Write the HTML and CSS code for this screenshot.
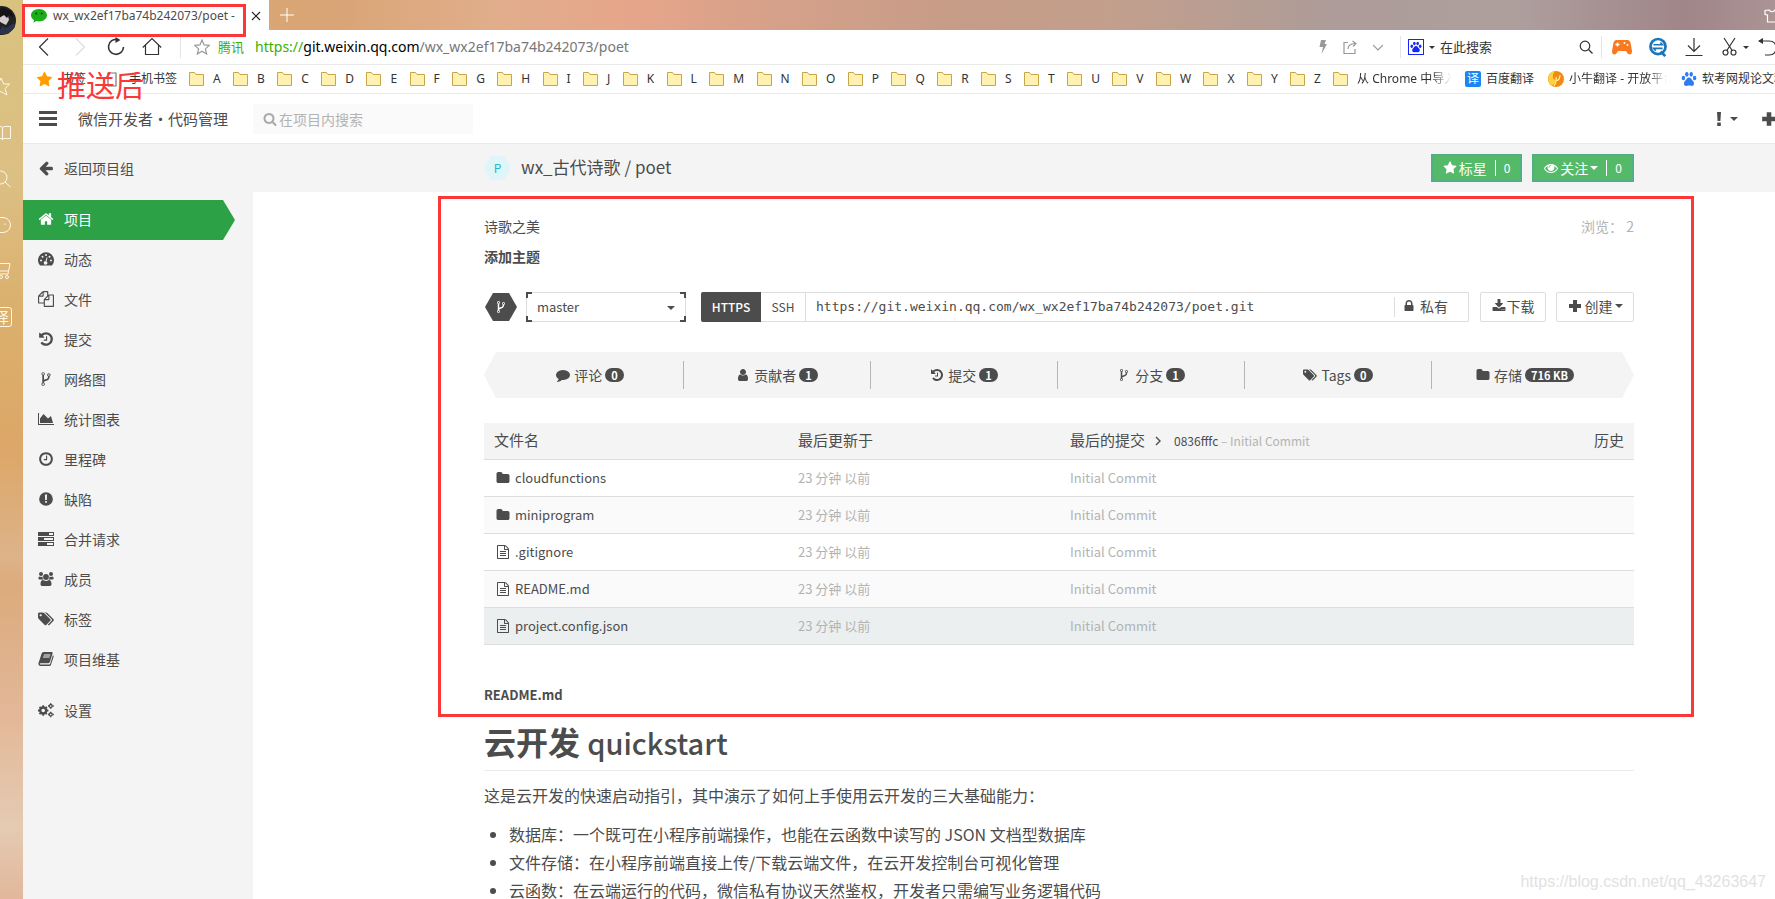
FILE: index.html
```html
<!DOCTYPE html>
<html lang="zh-CN">
<head>
<meta charset="utf-8">
<title>wx_wx2ef17ba74b242073/poet</title>
<link rel="stylesheet" href="styles.css">
</head>
<body>
<svg class="sprite" aria-hidden="true">
  <symbol id="home" viewBox="0 0 1792 1792"><path d="M1472 992v480q0 26-19 45t-45 19h-384v-384h-256v384h-384q-26 0-45-19t-19-45v-480q0-1 .5-3t.5-3l575-474 575 474q1 2 1 6zm223-69l-62 74q-8 9-21 11h-3q-13 0-21-7l-692-577-692 577q-12 8-24 7-13-2-21-11l-62-74q-8-10-7-23.500t11-21.500l719-599q32-26 76-26t76 26l244 204v-195q0-14 9-23t23-9h192q14 0 23 9t9 23v408l219 182q10 8 11 21.500t-7 23.500z"/></symbol>
  <symbol id="files" viewBox="0 0 1792 1792"><path d="M1696 384q40 0 68 28t28 68v1216q0 40-28 68t-68 28h-960q-40 0-68-28t-28-68v-288h-544q-40 0-68-28t-28-68v-672q0-40 20-88t48-76l408-408q28-28 76-48t88-20h416q40 0 68 28t28 68v328q68-40 128-40h416zm-544 213l-299 299h299v-299zm-640-384l-299 299h299v-299zm196 647l316-316v-416h-384v416q0 40-28 68t-68 28h-416v640h512v-256q0-40 20-88t48-76zm956 804v-1152h-384v416q0 40-28 68t-68 28h-416v640h896z"/></symbol>
  <symbol id="history" viewBox="0 0 1792 1792"><path d="M1664 896q0 156-61 298t-164 245-245 164-298 61q-172 0-327-72.500t-264-204.500q-7-10-6.500-22.500t8.500-20.500l137-138q10-9 25-9 16 2 23 12 73 95 179 147t225 52q104 0 198.500-40.500t163.500-109.500 109.500-163.500 40.500-198.500-40.500-198.500-109.500-163.500-163.500-109.500-198.500-40.500q-98 0-188 35.500t-160 101.500l137 138q31 30 14 69-17 40-59 40h-448q-26 0-45-19t-19-45v-448q0-42 40-59 39-17 69 14l130 129q107-101 244.500-156.500t284.500-55.500q156 0 298 61t245 164 164 245 61 298zm-640-288v448q0 14-9 23t-23 9h-320q-14 0-23-9t-9-23v-64q0-14 9-23t23-9h224v-352q0-14 9-23t23-9h64q14 0 23 9t9 23z"/></symbol>
  <symbol id="fork" viewBox="0 0 1792 1792"><path d="M672 1472q0-40-28-68t-68-28-68 28-28 68 28 68 68 28 68-28 28-68zm0-1152q0-40-28-68t-68-28-68 28-28 68 28 68 68 28 68-28 28-68zm640 128q0-40-28-68t-68-28-68 28-28 68 28 68 68 28 68-28 28-68zm96 0q0 52-26 96.500t-70 69.500q-2 287-226 414-67 38-203 81-128 40-169.500 71t-41.500 100v26q44 25 70 69.500t26 96.500q0 80-56 136t-136 56-136-56-56-136q0-52 26-96.500t70-69.500v-820q-44-25-70-69.500t-26-96.500q0-80 56-136t136-56 136 56 56 136q0 52-26 96.500t-70 69.500v497q54-26 154-57 55-17 87.500-29.500t70.500-31 59-39.500 40.500-51 28-69.500 8.500-91.500q-44-25-70-69.500t-26-96.500q0-80 56-136t136-56 136 56 56 136z"/></symbol>
  <symbol id="chart" viewBox="0 0 2048 1792"><path d="M2048 1536v128h-2048v-1536h128v1408h1920zm-384-1024l256 896h-1664v-576l448-576 576 576z"/></symbol>
  <symbol id="clock" viewBox="0 0 1792 1792"><path d="M1024 544v448q0 14-9 23t-23 9h-320q-14 0-23-9t-9-23v-64q0-14 9-23t23-9h224v-352q0-14 9-23t23-9h64q14 0 23 9t9 23zm416 352q0-148-73-273t-198-198-273-73-273 73-198 198-73 273 73 273 198 198 273 73 273-73 198-198 73-273zm224 0q0 209-103 385.500t-279.500 279.500-385.500 103-385.500-103-279.500-279.500-103-385.500 103-385.500 279.500-279.500 385.500-103 385.500 103 279.500 279.500 103 385.500z"/></symbol>
  <symbol id="alert" viewBox="0 0 1792 1792"><path fill-rule="evenodd" d="M896 128a768 768 0 1 1 0 1536a768 768 0 1 1 0-1536zM780 384l18 620h196l18-620zM800 1120h192v190h-192z"/></symbol>
  <symbol id="server" viewBox="0 0 16 16"><path fill-rule="evenodd" d="M0 1h16v4H0zM11 2h4v2h-4zM0 6h16v4H0zM6 7h9v2H6zM0 11h16v4H0zM9 12h6v2H9z"/></symbol>
  <symbol id="gauge" viewBox="0 0 16 16"><path fill-rule="evenodd" d="M2 14.500A8 8 0 1 1 14 14.500zM2 9.500a1 1 0 1 0 2 0a1 1 0 1 0-2 0zM3.500 5.700a1 1 0 1 0 2 0a1 1 0 1 0-2 0zM7 4a1 1 0 1 0 2 0a1 1 0 1 0-2 0zM10.500 5.700a1 1 0 1 0 2 0a1 1 0 1 0-2 0zM12 9.500a1 1 0 1 0 2 0a1 1 0 1 0-2 0zM8.700 6.200l-1.200 4a1.700 1.700 0 1 0 1 .3l1-4z"/></symbol>
  <symbol id="users" viewBox="0 0 16 16"><circle cx="8" cy="6" r="2.900"/><circle cx="3" cy="3" r="2"/><circle cx="13" cy="3" r="2"/><path d="M1.500 5.500c1 .6 2 .6 3 0c0 1.500.3 2 1 3H1.500Q.4 8.500.4 7.200T1.500 5.500zM14.500 5.500c-1 .6-2 .6-3 0c0 1.500-.3 2-1 3h4q1.100 0 1.100-1.300t-1.100-1.700zM5.200 9c1.800 1.200 3.800 1.200 5.600 0c2 .1 2.700 1.600 2.700 4.200c0 1.200-.8 1.800-2 1.800h-7c-1.200 0-2-.6-2-1.800C2.500 10.600 3.200 9.100 5.200 9z"/></symbol>
  <symbol id="tags" viewBox="0 0 1920 1792"><path d="M448 448q0-53-37.500-90.500t-90.500-37.500-90.500 37.500-37.500 90.500 37.500 90.500 90.500 37.500 90.500-37.500 37.500-90.500zm1067 576q0 53-37 90l-491 492q-39 37-91 37-53 0-90-37l-715-716q-38-37-64.500-101t-26.500-117v-416q0-52 38-90t90-38h416q53 0 117 26.500t102 64.500l715 714q37 39 37 91zm384 0q0 53-37 90l-491 492q-39 37-91 37-36 0-59-14t-53-45l470-470q37-37 37-90 0-52-37-91l-715-714q-38-38-102-64.500t-117-26.500h224q53 0 117 26.500t102 64.500l715 714q37 39 37 91z"/></symbol>
  <symbol id="book" viewBox="0 0 16 16"><path fill-rule="evenodd" d="M5.500 1h8.200q1.300.1.900 1.500l-2.700 8.600q-.4 1.100-1.500 1.100H2.500q-.9 0-.7.700q.2.600 1 .6h8.400q.8 0 1.100-.9l2.600-8.400q1 .4.700 1.500l-2.600 8q-.4 1.300-1.700 1.300H2.500Q.6 15 .4 13q0-.8.300-1.600L3.600 2.600Q4.100 1 5.500 1zM5.900 3.500l-.3.900h6.600l.3-.9zM5.200 5.600l-.3.900h6.600l.3-.9z"/></symbol>
  <symbol id="cogs" viewBox="0 0 16 16"><path fill="none" stroke="currentColor" stroke-width="2.400" d="M2.200 8.500a3 3 0 1 0 6 0a3 3 0 1 0-6 0"/><path fill="none" stroke="currentColor" stroke-width="1.800" d="M5.200 3.200v2M5.200 11.800v2M0 8.500h2M8.400 8.500h2M1.500 4.800l1.400 1.400M7.500 10.800l1.400 1.400M1.500 12.200l1.400-1.400M7.500 6.200l1.400-1.400"/><g fill="none" stroke="currentColor" stroke-width="1.300"><circle cx="12.700" cy="4" r="1.500"/><circle cx="12.700" cy="12.500" r="1.500"/><path d="M12.700 1.200v1M12.700 5.800v1M10 4h1M14.500 4h1.300M12.700 9.700v1M12.700 14.300v1M10 12.500h1M14.500 12.500h1.300"/></g></symbol>
  <symbol id="left" viewBox="0 0 1792 1792"><path d="M1664 896v128q0 53-32.500 90.500t-84.500 37.500h-704l293 294q38 36 38 90t-38 90l-75 76q-37 37-90 37-52 0-91-37l-651-652q-37-37-37-90 0-52 37-91l651-650q38-38 91-38 52 0 90 38l75 74q38 38 38 91t-38 91l-293 293h704q52 0 84.500 37.500t32.500 90.500z"/></symbol>
  <symbol id="star" viewBox="0 0 1792 1792"><path d="M1728 647q0 22-26 48l-363 354 86 500q1 7 1 20 0 21-10.500 35.500t-30.500 14.500q-19 0-40-12l-449-236-449 236q-22 12-40 12-21 0-31.500-14.500t-10.500-35.500q0-6 2-20l86-500-364-354q-25-27-25-48 0-37 56-46l502-73 225-455q19-41 49-41t49 41l225 455 502 73q56 9 56 46z"/></symbol>
  <symbol id="eye" viewBox="0 0 1792 1792"><path d="M1664 960q-152-236-381-353 61 104 61 225 0 185-131.500 316.500t-316.500 131.500-316.500-131.500-131.500-316.500q0-121 61-225-229 117-381 353 133 205 333.500 326.500t434.500 121.500 434.500-121.500 333.500-326.500zm-720-384q0-20-14-34t-34-14q-125 0-214.500 89.500t-89.500 214.500q0 20 14 34t34 14 34-14 14-34q0-86 61-147t147-61q20 0 34-14t14-34zm848 384q0 34-20 69-140 230-376.500 368.500t-499.500 138.500-499.500-139-376.500-368q-20-35-20-69t20-69q140-229 376.500-368t499.500-139 499.500 139 376.500 368q20 35 20 69z"/></symbol>
  <symbol id="folder" viewBox="0 0 1792 1792"><path d="M1728 608v704q0 92-66 158t-158 66h-1216q-92 0-158-66t-66-158v-960q0-92 66-158t158-66h320q92 0 158 66t66 158v32h672q92 0 158 66t66 158z"/></symbol>
  <symbol id="file" viewBox="0 0 1792 1792"><path d="M1596 380q28 28 48 76t20 88v1152q0 40-28 68t-68 28h-1344q-40 0-68-28t-28-68v-1600q0-40 28-68t68-28h896q40 0 88 20t76 48zm-444-244v376h376q-10-29-22-41l-313-313q-12-12-41-22zm384 1528v-1024h-416q-40 0-68-28t-28-68v-416h-768v1536h1280zm-1024-864q0-14 9-23t23-9h704q14 0 23 9t9 23v64q0 14-9 23t-23 9h-704q-14 0-23-9t-9-23v-64zm736 224q14 0 23 9t9 23v64q0 14-9 23t-23 9h-704q-14 0-23-9t-9-23v-64q0-14 9-23t23-9h704zm0 256q14 0 23 9t9 23v64q0 14-9 23t-23 9h-704q-14 0-23-9t-9-23v-64q0-14 9-23t23-9h704z"/></symbol>
  <symbol id="lock" viewBox="0 0 1792 1792"><path d="M640 768h512v-192q0-106-75-181t-181-75-181 75-75 181v192zm832 96v576q0 40-28 68t-68 28h-960q-40 0-68-28t-28-68v-576q0-40 28-68t68-28h32v-192q0-184 132-316t316-132 316 132 132 316v192h32q40 0 68 28t28 68z"/></symbol>
  <symbol id="download" viewBox="0 0 1792 1792"><path d="M1344 1344q0-26-19-45t-45-19-45 19-19 45 19 45 45 19 45-19 19-45zm256 0q0-26-19-45t-45-19-45 19-19 45 19 45 45 19 45-19 19-45zm128-224v320q0 40-28 68t-68 28h-1472q-40 0-68-28t-28-68v-320q0-40 28-68t68-28h465l135 136q58 56 136 56t136-56l136-136h464q40 0 68 28t28 68zm-325-569q17 41-14 70l-448 448q-18 19-45 19t-45-19l-448-448q-31-29-14-70 17-39 59-39h256v-448q0-26 19-45t45-19h256q26 0 45 19t19 45v448h256q42 0 59 39z"/></symbol>
  <symbol id="plus" viewBox="0 0 14 14"><path d="M5 1h4v4h4v4H9v4H5V9H1V5h4z"/></symbol>
  <symbol id="search" viewBox="0 0 1792 1792"><path d="M1216 832q0-185-131.500-316.500t-316.500-131.500-316.500 131.500-131.500 316.500 131.500 316.500 316.500 131.500 316.500-131.500 131.500-316.500zm512 832q0 52-38 90t-90 38q-54 0-90-38l-343-342q-179 124-399 124-143 0-273.500-55.500t-225-150-150-225-55.500-273.500 55.500-273.500 150-225 225-150 273.500-55.500 273.500 55.500 225 150 150 225 55.500 273.500q0 220-124 399l343 343q37 37 37 90z"/></symbol>
  <symbol id="comment" viewBox="0 0 1792 1792"><path d="M1792 896q0 174-120 321.500t-326 233-450 85.500q-70 0-145-8-198 175-460 242-49 14-114 22-17 2-30.500-9t-17.500-29v-1q-3-4-.5-12t2-10 4.500-9.500l6-9 7-8.500 8-9q7-8 31-34.500t34.500-38 31-39.500 32.500-51 27-59 26-76q-157-89-247.500-220t-90.500-281q0-174 120-321.500t326-233 450-85.500 450 85.500 326 233 120 321.500z"/></symbol>
  <symbol id="user" viewBox="0 0 1792 1792"><path d="M1536 1399q0 109-62.500 187t-150.500 78h-854q-88 0-150.500-78t-62.500-187q0-85 8.500-160.500t31.500-152 58.500-131 94-89 134.500-34.500q131 128 313 128t313-128q76 0 134.500 34.500t94 89 58.500 131 31.500 152 8.500 160.500zm-256-887q0 159-112.500 271.500t-271.500 112.500-271.500-112.500-112.500-271.500 112.500-271.500 271.500-112.500 271.500 112.500 112.500 271.500z"/></symbol>
  <symbol id="caret" viewBox="0 0 8 4"><path d="M0 0h8L4 4z"/></symbol>
  <symbol id="bmfolder" viewBox="0 0 15 14"><path fill="#fff1b0" stroke="#c9a448" d="M.5.500h5l1.500 2h7.500v11H.500z"/></symbol>
  <symbol id="paw" viewBox="0 0 16 16"><ellipse cx="2.400" cy="7" rx="1.700" ry="2.300"/><ellipse cx="5.800" cy="3.300" rx="1.700" ry="2.400"/><ellipse cx="10.200" cy="3.300" rx="1.700" ry="2.400"/><ellipse cx="13.600" cy="7" rx="1.700" ry="2.300"/><path d="M8 6.500c2 0 2.500 2 3.800 3.300c2 2 1.500 5.200-1 5.200c-1.200 0-1.800-.4-2.800-.4s-1.600.4-2.800.4c-2.500 0-3-3.200-1-5.200C5.500 8.500 6 6.500 8 6.500z"/></symbol>
</svg>

<div class="screen">
  <aside class="rail">
    <svg class="avatar" viewBox="0 0 29 29"><circle cx="14.500" cy="14.500" r="14.500" fill="#222226"/><path fill="#d5cccd" d="M12 10l5-1 4 1 1 4-3 5-4-2-3-2z"/><path fill="#141416" d="M8 5l8-4 8 4 3 7-5-3-2 3-3-3-5 3-5 4z"/><path fill="#2b344b" d="M15 20l4 2 8-5 1 4-7 7H11z"/></svg>
    <svg viewBox="0 0 20 20"><path d="M10 1l2.700 6h6l-4.700 4.500L16 18l-6-3.500L4 18l2-6.500L1.300 7h6z"/></svg>
    <svg viewBox="0 0 20 20"><path d="M11.500 5v11.500M11.500 5l-1-1.500H1v12h9.500l1 1.500 1-1.500h7v-12h-7z"/></svg>
    <svg viewBox="0 0 20 20"><circle cx="9.500" cy="8.500" r="6.500"/><path d="M14 13l5.500 5"/></svg>
    <svg viewBox="0 0 20 20"><path d="M3 2.500h9a7.500 7.500 0 0 1 0 15H3M14 8.500v1.500"/></svg>
    <svg viewBox="0 0 20 20"><path d="M1 2.500h18l-2 10.500H4M4 10h13.500"/><circle cx="10" cy="16" r="1.500"/><circle cx="16" cy="16" r="1.500"/></svg>
    <span class="rail-word">译</span>
  </aside>

  <div class="window">
    <div class="tabs">
      <div class="tab">
        <svg class="wechat" viewBox="0 0 16 14"><path fill="#1aad19" d="M8 0c4.400 0 8 2.800 8 6.200s-3.600 6.200-8 6.200c-1 0-1.900-.1-2.800-.4L2.500 13.800l.6-2.700C1.200 10 0 8.200 0 6.200C0 2.800 3.600 0 8 0z"/><circle cx="5.200" cy="4.500" r="1.100" fill="#0a4d0a"/><circle cx="10.800" cy="4.500" r="1.100" fill="#0a4d0a"/></svg>
        <span class="tab-title">wx_wx2ef17ba74b242073/poet -</span>
        <button class="plain" aria-label="关闭标签"><svg class="i10" viewBox="0 0 10 10"><path fill="none" stroke="#222" stroke-width="1.200" d="M1 1l8 8M9 1l-8 8"/></svg></button>
      </div>
      <button class="plain new-tab" aria-label="新标签"><svg class="i14" viewBox="0 0 14 14"><path stroke="#fff" d="M7 0v14M0 7h14"/></svg></button>
      <svg class="shirt" viewBox="0 0 16 14"><path fill="none" stroke="#fff" stroke-width="1.200" d="M5 1L1 1.500v4l2.500.5v7h9V6l2.500-.5v-4L11 1Q8 4.500 5 1z"/></svg>
      <span class="mark mark-tab"></span>
    </div>

    <div class="navbar">
      <div class="nav-buttons">
        <button class="plain" aria-label="后退"><svg class="i20" viewBox="0 0 20 20"><path class="ln" d="M14 1.500L5.500 10l8.500 8.500"/></svg></button>
        <button class="plain pale" aria-label="前进"><svg class="i20" viewBox="0 0 20 20"><path class="ln" d="M6 1.500l8.500 8.500L6 18.500"/></svg></button>
        <button class="plain" aria-label="刷新"><svg class="i20" viewBox="0 0 20 20"><path class="ln thick" d="M11.500 2.500A7.500 7.500 0 1 0 17.500 10"/><path d="M9.500 0l5 3-5 3z"/></svg></button>
        <button class="plain" aria-label="主页"><svg class="i20" viewBox="0 0 20 20"><path class="ln" d="M.8 10.500L10 1.500l9.200 9M3.500 8.500v9h13v-9"/></svg></button>
      </div>
      <div class="address">
        <svg class="i16 outline-star" viewBox="0 0 16 16"><path class="ln" d="M8 1l2.100 4.900 5.200.5-3.900 3.500 1.200 5.100L8 12.300 3.400 15l1.200-5.100L.7 6.400l5.200-.5z"/></svg>
        <span class="owner">腾讯</span>
        <span class="url"><span class="scheme">https://</span><b>git.weixin.qq.com</b>/wx_wx2ef17ba74b242073/poet</span>
      </div>
      <div class="addr-tools">
        <svg class="bolt" viewBox="0 0 8 14"><path d="M2 0h5L5.500 4H8L2.500 14 4 7H.5z"/></svg>
        <svg class="i14" viewBox="0 0 14 14"><path class="ln" d="M5 2.500H1v11h11V9M5 9q0-5 7-5.500M9.500 1l3.500 2.500L10 6.500"/></svg>
        <svg class="i10" viewBox="0 0 10 10"><path class="ln" d="M0 3l5 5 5-5"/></svg>
      </div>
      <label class="engine">
        <span class="baidu"><svg viewBox="0 0 16 16"><use href="#paw"/></svg></span>
        <svg class="mini-caret"><use href="#caret"/></svg>
        <input type="text" placeholder="在此搜索">
        <svg class="i14" viewBox="0 0 14 14"><circle cx="6" cy="6" r="4.800" class="ln"/><path class="ln" d="M9.500 9.500L13.500 13.500"/></svg>
      </label>
      <div class="extras">
        <svg class="i20" viewBox="0 0 20 16"><path fill="#f8791f" d="M4.500 1h11q2.500 0 3.200 3.500L20 12q0 3.500-2.500 3.500-1.500 0-3.500-3.500H6q-2 3.500-3.500 3.500Q0 15.500 0 12l1.300-7.500Q2 1 4.500 1z"/><path stroke="#fff" stroke-width="1.400" d="M3.500 5.500h4M5.500 3.500v4"/><circle cx="12.500" cy="4" r="1" fill="#fff"/><circle cx="15.500" cy="6" r="1" fill="#fff"/></svg>
        <svg class="i20" viewBox="0 0 20 22"><circle cx="10" cy="10.500" r="8.300" fill="#fff" stroke="#1a76b8" stroke-width="3"/><path stroke="#1a76b8" stroke-width="3" d="M13 16l5 5"/><path fill="none" stroke="#1a76b8" stroke-width="1.700" d="M5 8.500h10L12.500 6M15 12.500H5L7.500 15"/></svg>
        <svg class="i20" viewBox="0 0 20 20"><path class="ln" d="M10 1v13M4 8.500l6 6 6-6M1.500 18.500h17"/></svg>
        <svg class="i20" viewBox="0 0 20 20"><path class="ln" d="M4 1l8.500 13M15 1L6.500 14"/><circle class="ln" cx="5.500" cy="15.500" r="2.500"/><circle class="ln" cx="13.500" cy="15.500" r="2.500"/></svg>
        <svg class="mini-caret"><use href="#caret"/></svg>
        <svg class="i20" viewBox="0 0 20 20"><path class="ln" d="M2 4h10q7 0 7 7T12 18H8"/><path d="M1 4l5-3v6z"/></svg>
      </div>
    </div>

    <nav class="bookmarks">
      <a href="#"><svg class="bm-star" viewBox="80 100 1632 1560"><use href="#star" width="1792" height="1792"/></svg><span>书签</span></a>
      <a href="#" class="phone-mark"><svg viewBox="0 0 10 15"><path fill="none" stroke="#777" stroke-width="1.200" d="M1 1h8v13H1z"/></svg><span>手机书签</span></a>
      <ul class="letters">
        <li><svg><use href="#bmfolder"/></svg>A</li><li><svg><use href="#bmfolder"/></svg>B</li><li><svg><use href="#bmfolder"/></svg>C</li><li><svg><use href="#bmfolder"/></svg>D</li><li><svg><use href="#bmfolder"/></svg>E</li><li><svg><use href="#bmfolder"/></svg>F</li><li><svg><use href="#bmfolder"/></svg>G</li><li><svg><use href="#bmfolder"/></svg>H</li><li><svg><use href="#bmfolder"/></svg>I</li><li><svg><use href="#bmfolder"/></svg>J</li><li><svg><use href="#bmfolder"/></svg>K</li><li><svg><use href="#bmfolder"/></svg>L</li><li><svg><use href="#bmfolder"/></svg>M</li><li><svg><use href="#bmfolder"/></svg>N</li><li><svg><use href="#bmfolder"/></svg>O</li><li><svg><use href="#bmfolder"/></svg>P</li><li><svg><use href="#bmfolder"/></svg>Q</li><li><svg><use href="#bmfolder"/></svg>R</li><li><svg><use href="#bmfolder"/></svg>S</li><li><svg><use href="#bmfolder"/></svg>T</li><li><svg><use href="#bmfolder"/></svg>U</li><li><svg><use href="#bmfolder"/></svg>V</li><li><svg><use href="#bmfolder"/></svg>W</li><li><svg><use href="#bmfolder"/></svg>X</li><li><svg><use href="#bmfolder"/></svg>Y</li><li><svg><use href="#bmfolder"/></svg>Z</li>
      </ul>
      <div class="sites">
        <a href="#" class="wide"><svg class="bm-folder"><use href="#bmfolder"/></svg><span class="fade">从 Chrome 中导入</span></a>
        <a href="#"><span class="yi">译</span><span>百度翻译</span></a>
        <a href="#"><svg class="i16" viewBox="0 0 16 16"><circle cx="8" cy="8" r="8" fill="#f28a12"/><path fill="#ffd23c" d="M7 0a8 8 0 0 0-3 14.500Q7 13 7.500 9Q2 7 7 0z"/><path fill="none" stroke="#fff1a8" stroke-width="1.200" d="M6 15Q9 10 8 6M8 10Q12 9 12 4"/></svg><span class="fade long">小牛翻译 - 开放平台</span></a>
        <a href="#"><svg class="i16 blue"><use href="#paw"/></svg><span>软考网规论文精选</span></a>
      </div>
      <strong class="note">推送后</strong>
    </nav>

    <header class="site-head">
      <button class="plain burger" aria-label="菜单"><i></i><i></i><i></i></button>
      <span class="brand">微信开发者・代码管理</span>
      <label class="search"><svg><use href="#search"/></svg><input type="text" placeholder="在项目内搜索"></label>
      <div class="head-tools">
        <button class="plain" aria-label="提醒"><svg class="bang" viewBox="0 0 6 14"><path d="M1 0h4l-.6 9H1.600zM1.200 10.500h3.600V14H1.200z"/></svg><svg class="caret"><use href="#caret"/></svg></button>
        <button class="plain" aria-label="新建"><svg class="i16"><use href="#plus"/></svg></button>
      </div>
    </header>

    <div class="body">
      <nav class="side">
        <a class="back" href="#"><svg><use href="#left"/></svg>返回项目组</a>
        <a class="active" href="#"><svg><use href="#home"/></svg>项目</a>
        <a href="#"><svg><use href="#gauge"/></svg>动态</a>
        <a href="#"><svg><use href="#files"/></svg>文件</a>
        <a href="#"><svg><use href="#history"/></svg>提交</a>
        <a href="#"><svg><use href="#fork"/></svg>网络图</a>
        <a href="#"><svg><use href="#chart"/></svg>统计图表</a>
        <a href="#"><svg><use href="#clock"/></svg>里程碑</a>
        <a href="#"><svg><use href="#alert"/></svg>缺陷</a>
        <a href="#"><svg><use href="#server"/></svg>合并请求</a>
        <a href="#"><svg><use href="#users"/></svg>成员</a>
        <a href="#"><svg><use href="#tags"/></svg>标签</a>
        <a href="#"><svg><use href="#book"/></svg>项目维基</a>
        <a class="settings" href="#"><svg><use href="#cogs"/></svg>设置</a>
      </nav>

      <main class="main">
        <div class="title-bar">
          <span class="hex letter">P</span>
          <h2>wx_古代诗歌 / poet</h2>
          <button class="green"><svg><use href="#star"/></svg>标星<em>0</em></button>
          <button class="green"><svg><use href="#eye"/></svg>关注<svg class="caret"><use href="#caret"/></svg><em>0</em></button>
        </div>

        <section class="repo">
          <div class="row"><span>诗歌之美</span><span class="muted">浏览： 2</span></div>
          <a class="topic" href="#">添加主题</a>

          <div class="clone">
            <span class="hex dark"><svg><use href="#fork"/></svg></span>
            <label class="branch"><select aria-label="分支"><option>master</option></select><svg class="caret"><use href="#caret"/></svg></label>
            <div class="group">
              <button class="proto on">HTTPS</button>
              <button class="proto">SSH</button>
              <input type="text" readonly aria-label="仓库地址" value="https://git.weixin.qq.com/wx_wx2ef17ba74b242073/poet.git">
              <span class="private"><svg><use href="#lock"/></svg>私有</span>
            </div>
            <button class="box download"><svg><use href="#download"/></svg>下载</button>
            <button class="box create"><svg><use href="#plus"/></svg>创建<svg class="caret"><use href="#caret"/></svg></button>
          </div>

          <ul class="stats">
            <li><svg><use href="#comment"/></svg>评论<b>0</b></li>
            <li><svg><use href="#user"/></svg>贡献者<b>1</b></li>
            <li><svg><use href="#history"/></svg>提交<b>1</b></li>
            <li><svg><use href="#fork"/></svg>分支<b>1</b></li>
            <li><svg><use href="#tags"/></svg>Tags<b>0</b></li>
            <li><svg><use href="#folder"/></svg>存储<b>716 KB</b></li>
          </ul>

          <table class="files">
            <colgroup><col class="c1"><col class="c2"><col><col class="c4"></colgroup>
            <thead><tr><th>文件名</th><th>最后更新于</th><th>最后的提交<svg class="angle" viewBox="0 0 6 10"><path fill="none" stroke="currentColor" stroke-width="1.400" d="M1 1l4 4-4 4"/></svg><small>0836fffc <span class="muted">– Initial Commit</span></small></th><th class="right">历史</th></tr></thead>
            <tbody>
              <tr><td><a href="#"><svg><use href="#folder"/></svg>cloudfunctions</a></td><td>23 分钟 以前</td><td>Initial Commit</td><td></td></tr>
              <tr><td><a href="#"><svg><use href="#folder"/></svg>miniprogram</a></td><td>23 分钟 以前</td><td>Initial Commit</td><td></td></tr>
              <tr><td><a href="#"><svg><use href="#file"/></svg>.gitignore</a></td><td>23 分钟 以前</td><td>Initial Commit</td><td></td></tr>
              <tr><td><a href="#"><svg><use href="#file"/></svg>README.md</a></td><td>23 分钟 以前</td><td>Initial Commit</td><td></td></tr>
              <tr class="hover"><td><a href="#"><svg><use href="#file"/></svg>project.config.json</a></td><td>23 分钟 以前</td><td>Initial Commit</td><td></td></tr>
            </tbody>
          </table>

          <h3>README.md</h3>
        </section>

        <article class="readme">
          <h1>云开发 <span>quickstart</span></h1>
          <p>这是云开发的快速启动指引，其中演示了如何上手使用云开发的三大基础能力：</p>
          <ul>
            <li>数据库：一个既可在小程序前端操作，也能在云函数中读写的 JSON 文档型数据库</li>
            <li>文件存储：在小程序前端直接上传/下载云端文件，在云开发控制台可视化管理</li>
            <li>云函数：在云端运行的代码，微信私有协议天然鉴权，开发者只需编写业务逻辑代码</li>
          </ul>
        </article>
      </main>
    </div>
  </div>
  <span class="watermark">https://blog.csdn.net/qq_43263647</span>
</div>
</body>
</html>
```
FILE: styles.css
```css
* { box-sizing: border-box; }
body { margin: 0; color: #4c4c4c; background: #fff; font: 14px/20px "Noto Sans CJK SC", sans-serif; }
a { color: inherit; text-decoration: none; }
ul { list-style: none; margin: 0; padding: 0; }
button, input, select { font: inherit; color: inherit; }
svg { display: block; flex: none; fill: currentColor; width: 14px; height: 14px; }
input { border: 0; padding: 0; background: none; outline: 0; min-width: 0; }
.sprite { position: absolute; width: 0; height: 0; }
.plain { border: 0; padding: 0; background: none; display: flex; align-items: center; }
.ln { fill: none; stroke: currentColor; stroke-width: 1.2; }
.thick { stroke-width: 1.6; }
.i10 { width: 10px; height: 10px; }
.i14 { width: 14px; height: 14px; }
.i16 { width: 16px; height: 16px; }
.i20 { width: 20px; height: 20px; }
.caret { width: 8px; height: 4px; }
.mini-caret { width: 6px; height: 3px; }
.muted { color: #b3b3b3; }

.screen { display: flex; height: 100vh; overflow: hidden; position: relative; }
.window { flex: 1; min-width: 0; display: flex; flex-direction: column; }

/* desktop strip on the left */
.rail { width: 23px; flex: none; overflow: hidden; padding-top: 6px; background: linear-gradient(#d9c27e, #dcbf84 20%, #dbaf6c 35%, #dca768 50%, #deb389 62%, #dcab7c 65%, #e3b899 80%, #e4cbb2 92%, #e2b79b); display: flex; flex-direction: column; color: #fff8e4; }
.rail svg { width: 20px; height: 20px; margin: 0 0 26px -9px; fill: none; stroke: currentColor; stroke-width: 1; }
.rail .avatar { width: 29px; height: 29px; margin: 0 0 42px -13px; stroke: none; }
.rail-word { width: 21px; height: 20px; margin-left: -9px; border: 1px solid; border-radius: 3px; font-size: 15px; line-height: 18px; text-align: center; }

/* browser */
.tabs { position: relative; display: flex; height: 30px; flex: none; background: linear-gradient(90deg, #dca868 0, #d9a577 18%, #e1ae8c 27%, #e6a58a 35%, #d7a18a 42%, #c59c87 54%, #c39f8c 62%, #ad9c99 75%, #ae9f9d 85%, #a08589 95%, #ab9494); }
.tab { width: 246px; background: #fff; display: flex; align-items: center; padding: 1px 8px 0; font: 12px/20px "Noto Sans", sans-serif; }
.wechat { width: 16px; height: 14px; }
.tab-title { flex: 1; margin-left: 6px; white-space: nowrap; }
.new-tab { margin-left: 11px; }
.shirt { width: 16px; height: 14px; margin: 9px -5px 0 auto; }
.mark { position: absolute; border: 3px solid #fb3737; }
.mark-tab { left: -1px; top: 4px; width: 224px; height: 33px; z-index: 2; }

.navbar { display: flex; align-items: center; flex: none; height: 35px; border-bottom: 1px solid #ebebeb; color: #333; }
.nav-buttons { display: flex; gap: 16px; padding: 0 18px 0 11px; height: 22px; border-right: 1px solid #e5e5e5; align-items: center; }
.pale { color: #ddd; }
.address { flex: 1; display: flex; align-items: center; padding-left: 13px; }
.outline-star { color: #999; }
.owner { margin: 0 11px 0 8px; color: #3bb000; font-size: 13px; }
.url { color: #777; font: 14px/20px "Noto Sans", sans-serif; white-space: nowrap; }
.url b { color: #000; font-weight: 400; }
.scheme { color: #3bb000; }
.addr-tools { display: flex; align-items: center; gap: 16px; padding-right: 17px; color: #999; }
.bolt { width: 8px; height: 14px; }
.engine { display: flex; align-items: center; width: 202px; height: 22px; padding: 0 8px 0 7px; border: solid #e5e5e5; border-width: 0 1px; }
.engine input { flex: 1; margin-left: 5px; font-size: 13px; }
.engine input::placeholder { color: #333; }
.engine .mini-caret { margin-left: 5px; }
.baidu { width: 16px; height: 16px; border: 1px solid #1527f3; color: #1527f3; display: flex; align-items: center; justify-content: center; }
.baidu svg { width: 12px; height: 12px; }
.extras { display: flex; align-items: center; width: 173px; padding-left: 10px; gap: 16px; overflow: hidden; }
.extras .mini-caret { margin: 0 -8px 0 -13px; }

.bookmarks { position: relative; display: flex; align-items: center; flex: none; height: 29px; padding-left: 14px; border-bottom: 1px solid #ebebeb; font: 12px/20px "Noto Sans", "Noto Sans CJK SC", sans-serif; color: #333; white-space: nowrap; }
.bookmarks a { display: flex; align-items: center; }
.bm-star { width: 15px; height: 15px; color: #ff9c00; margin-right: 10px; }
.phone-mark { margin-left: 21px; }
.phone-mark svg { width: 10px; height: 15px; margin-right: 12px; }
.letters { display: flex; flex: none; width: 1156px; padding: 0 12px 0 12px; justify-content: space-between; }
.letters li { display: flex; align-items: center; gap: 9px; }
.letters svg, .bm-folder { width: 15px; height: 14px; }
.sites { display: flex; gap: 14px; overflow: hidden; }
.sites a { gap: 5px; flex: none; }
.sites .wide { gap: 9px; }
.fade { width: 94px; overflow: hidden; -webkit-mask: linear-gradient(90deg, #000 80%, transparent); mask: linear-gradient(90deg, #000 80%, transparent); }
.long { width: 98px; }
.yi { width: 16px; height: 16px; border-radius: 2px; background: #1a86f5; color: #fff; line-height: 16px; text-align: center; }
.blue { color: #2d7df0; }
.note { position: absolute; left: 34px; top: -2px; color: #fb3737; font: 29px/42px "Noto Sans CJK SC", sans-serif; }

/* site header */
.site-head { display: flex; align-items: center; flex: none; height: 50px; padding-left: 16px; border-bottom: 1px solid #ebebeb; overflow: hidden; }
.burger { flex-direction: column; gap: 3px; width: 18px; }
.burger i { width: 18px; height: 3px; background: #4c4c4c; }
.brand { width: 175px; margin-left: 21px; font-size: 15px; white-space: nowrap; }
.search { display: flex; align-items: center; width: 220px; height: 30px; padding-left: 10px; gap: 2px; background: #fafafa; color: #aaa; }
.search input::placeholder { color: #b3b3b3; }
.head-tools { margin-left: auto; display: flex; gap: 23px; margin-right: -2px; }
.bang { width: 6px; height: 14px; margin-right: 8px; }

.body { flex: 1; display: flex; min-height: 0; background: #f4f4f4; }
.side { width: 230px; flex: none; }
.side a { display: flex; align-items: center; height: 40px; padding: 0 0 2px 15px; }
.side svg { width: 16px; height: 16px; margin-right: 10px; }
.side .back { height: 50px; margin-bottom: 6px; }
.side .active { width: 212px; color: #fff; background: #2ca146; clip-path: polygon(0 0, 200px 0, 100% 50%, 200px 100%, 0 100%); }
.side .settings { margin-top: 11px; }

.main { flex: 1; min-width: 0; background: linear-gradient(#f4f4f4 48px, #fff 48px); }
.title-bar { display: flex; align-items: center; gap: 10px; height: 48px; margin-bottom: 4px; padding: 0 141px 0 231px; }
.hex { display: flex; align-items: center; justify-content: center; clip-path: polygon(25% 0, 75% 0, 100% 50%, 75% 100%, 25% 100%, 0 50%); }
.letter { width: 27px; height: 24px; background: #def6f9; color: #2ab5c8; font-size: 12px; }
.title-bar h2 { flex: 1; margin: 0; padding-bottom: 2px; font-size: 17px; font-weight: 400; }
.green { display: flex; align-items: center; height: 28px; padding: 0 10px; border: 2px solid #50b083; background: #55b96a; color: #fff; line-height: 18px; }
.green svg { margin-right: 2px; }
.green .caret { margin: 0 0 0 2px; }
.green em { margin-left: 8px; padding-left: 8px; border-left: 1px solid #fff; font-style: normal; font-size: 12px; line-height: 16px; }

.repo { padding: 17px 56px 9px 43px; border: 3px solid #fb3737; margin: 0 81px 0 185px; }
.row, .topic, .clone, .stats, .files { margin-right: 1px; }
.row { display: flex; justify-content: space-between; }
.topic { display: block; margin-top: 10px; font-weight: 700; }
.clone { display: flex; align-items: center; margin-top: 26px; height: 30px; }
.dark { width: 32px; height: 28px; margin: 0 9px 0 1px; background: #4c4c4c; color: #fff; }
.branch { position: relative; width: 160px; height: 30px; margin-right: 15px; border: 1px solid transparent;
  --k: linear-gradient(#4c4c4c, #4c4c4c);
  background:
    var(--k) 0 0 / 6px 2px no-repeat border-box, var(--k) 0 0 / 2px 6px no-repeat border-box,
    var(--k) 100% 0 / 6px 2px no-repeat border-box, var(--k) 100% 0 / 2px 6px no-repeat border-box,
    var(--k) 0 100% / 6px 2px no-repeat border-box, var(--k) 0 100% / 2px 6px no-repeat border-box,
    var(--k) 100% 100% / 6px 2px no-repeat border-box, var(--k) 100% 100% / 2px 6px no-repeat border-box,
    linear-gradient(#fff, #fff) padding-box, linear-gradient(#ddd, #ddd) border-box; }
.branch select { width: 100%; height: 28px; padding: 0 10px; border: 0; background: none; appearance: none; font-size: 13px; }
.branch .caret { position: absolute; right: 10px; top: 13px; pointer-events: none; }
.group { flex: 1; display: flex; height: 30px; border: 1px solid #ddd; border-radius: 2px 0 0 2px; }
.proto { width: 45px; padding: 0; border: 0; border-right: 1px solid #ddd; background: #fff; font-size: 12px; }
.proto.on { width: 60px; margin: -1px 0 -1px -1px; border: 0; border-radius: 2px 0 0 2px; background: #4c4c4c; color: #fff; font-weight: 500; }
.group input { flex: 1; padding-left: 10px; font: 13px/20px "DejaVu Sans Mono", monospace; }
.private { display: flex; align-items: center; gap: 4px; width: 74px; height: 20px; margin-top: 4px; padding: 0 0 2px 7px; border-left: 1px solid #ddd; }
.box { display: flex; align-items: center; justify-content: center; height: 30px; padding: 0 0 2px; border: 1px solid #ddd; border-radius: 2px; background: #fff; }
.download { width: 66px; margin-left: 11px; gap: 1px; }
.create { width: 78px; margin-left: 10px; gap: 3px; }
.box .caret { margin-left: -1px; }

.stats { display: flex; height: 46px; margin-top: 30px; margin-bottom: 25px; padding: 9px 16px 9px 13px; background: #f4f4f4; clip-path: polygon(12px 0, calc(100% - 12px) 0, 100% 50%, calc(100% - 12px) 100%, 12px 100%, 0 50%); }
.stats li { flex: 1; display: flex; align-items: center; justify-content: center; border-right: 1px solid #b5b5b5; }
.stats li:last-child { border: 0; }
.stats svg { margin-right: 4px; }
.stats b { min-width: 18px; margin-left: 3px; padding: 0 6px; border-radius: 7px; background: #4c4c4c; color: #fff; font-size: 11px; line-height: 14px; text-align: center; }

.files { width: calc(100% - 1px); border-collapse: collapse; table-layout: fixed; }
.c1 { width: 304px; } .c2 { width: 272px; } .c4 { width: 80px; }
.files th, .files td { height: 37px; padding: 0 10px; border-bottom: 1px solid #ddd; text-align: left; font-weight: 400; }
.files th { height: 36px; padding-bottom: 1px; background: #f4f4f4; font-size: 15px; }
.files td { color: #b3b3b3; font-size: 13px; }
.files tr:nth-child(even) td { background: #fafafa; }
.files .hover td { background: #ebeff0; }
.files th.right { text-align: right; }
.files td a { display: flex; align-items: center; gap: 5px; padding-left: 2px; color: #4c4c4c; }
.angle { display: inline-block; width: 6px; height: 10px; margin: 0 13px 0 10px; }
.files small { font-size: 12px; }
.repo h3 { margin: 40px 0 0; font-size: 13px; line-height: 20px; }

.readme { padding: 0 141px 0 231px; font-size: 16px; line-height: 28px; }
.readme h1 { margin: 0 0 10px; padding: 4px 0 8px; border-bottom: 1px solid #ebebeb; font-size: 32px; line-height: 40px; }
.readme h1 span { font-size: 29px; font-weight: 500; }
.readme p { margin: 0 0 11px; }
.readme ul { padding-left: 25px; list-style: disc; }
.watermark { position: absolute; right: 9px; bottom: 7px; color: #e2e2e2; font: 16px/20px "Liberation Sans", sans-serif; }
```
